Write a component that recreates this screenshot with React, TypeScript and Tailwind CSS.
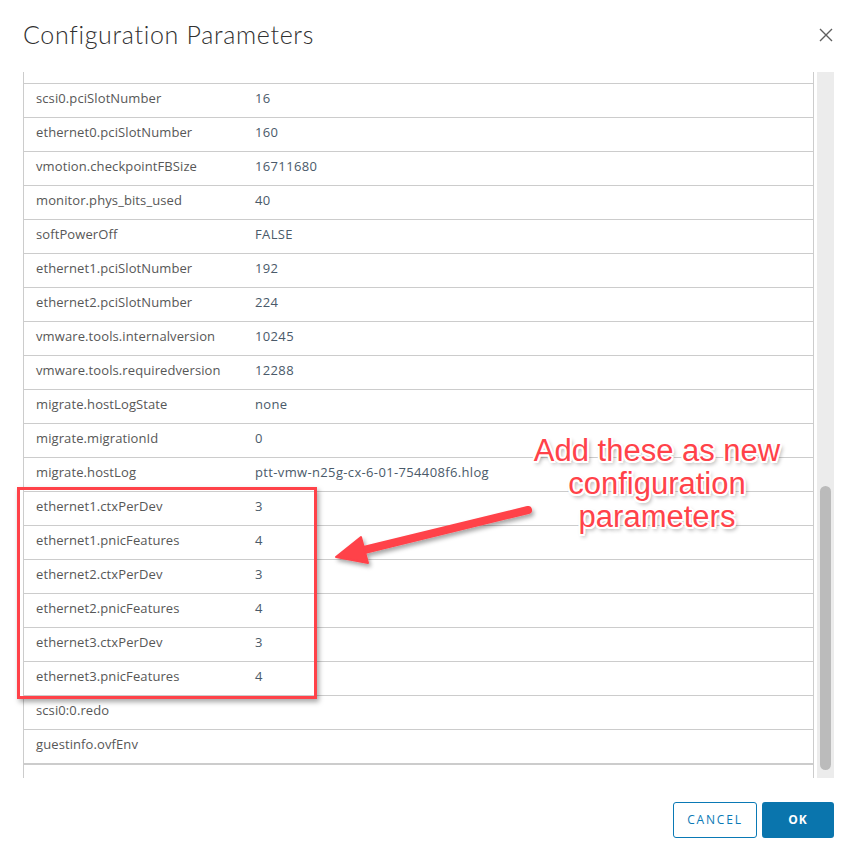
import React from "react";

const rows: [string, string][] = [
  ["scsi0.pciSlotNumber", "16"],
  ["ethernet0.pciSlotNumber", "160"],
  ["vmotion.checkpointFBSize", "16711680"],
  ["monitor.phys_bits_used", "40"],
  ["softPowerOff", "FALSE"],
  ["ethernet1.pciSlotNumber", "192"],
  ["ethernet2.pciSlotNumber", "224"],
  ["vmware.tools.internalversion", "10245"],
  ["vmware.tools.requiredversion", "12288"],
  ["migrate.hostLogState", "none"],
  ["migrate.migrationId", "0"],
  ["migrate.hostLog", "ptt-vmw-n25g-cx-6-01-754408f6.hlog"],
  ["ethernet1.ctxPerDev", "3"],
  ["ethernet1.pnicFeatures", "4"],
  ["ethernet2.ctxPerDev", "3"],
  ["ethernet2.pnicFeatures", "4"],
  ["ethernet3.ctxPerDev", "3"],
  ["ethernet3.pnicFeatures", "4"],
  ["scsi0:0.redo", ""],
  ["guestinfo.ovfEnv", ""],
];

export default function App() {
  return (
    <div className="relative w-[858px] h-[861px] bg-white overflow-hidden font-['Open_Sans',sans-serif]">
      {/* Header */}
      <div className="flex items-center justify-between h-[72px] pl-[23px] pr-[24px] pb-[3px]">
        <h1 className="text-[25px] font-light text-[#313131] tracking-[0.68px] font-['Lato',sans-serif]">
          Configuration Parameters
        </h1>
        <svg width="14" height="14" viewBox="0 0 14 14" className="mr-[1px] mt-[1px]">
          <path d="M1 1 L13 13 M13 1 L1 13" stroke="#5f5f5f" strokeWidth="1.4" />
        </svg>
      </div>

      {/* Body */}
      <div className="flex h-[706px] pl-[23px] pr-[24px] gap-[3px]">
        <div className="flex-1 border-l border-r border-[#cccccc] flex flex-col">
          <div className="h-[12px] border-b border-[#cccccc] shrink-0" />
          {rows.map(([k, v]) => (
            <div
              key={k}
              className="h-[34px] shrink-0 border-b border-[#cccccc] flex items-center pl-[12px] pb-[3px] text-[13px]"
            >
              <div className="w-[219px] text-[#575757] tracking-[0.1px]">{k}</div>
              <div className="text-[#4a5a6a] tracking-[0.35px]">{v}</div>
            </div>
          ))}
          <div className="h-[2px] bg-[#cccccc] -mt-[1px] shrink-0" />
        </div>
        <div className="w-[17px] bg-[#ececec] flex flex-col pt-[414px] px-[3px]">
          <div className="h-[284px] bg-[#bbbbbb] rounded-full" />
        </div>
      </div>

      {/* Footer */}
      <div className="flex justify-end gap-[5px] pr-[24px] pt-[24px]">
        <button className="w-[84px] h-[36px] border border-[#0a79b5] rounded-[3px] text-[#0a79b5] text-[12px] tracking-[1.8px] font-medium bg-white">
          CANCEL
        </button>
        <button className="w-[72px] h-[36px] bg-[#0a75ad] rounded-[3px] text-white text-[12px] tracking-[1px] font-bold">
          OK
        </button>
      </div>

      {/* Annotation: red box */}
      <div className="absolute left-[17px] top-[487px] w-[300px] h-[212px] border-[3px] border-[#ff4249] shadow-[2px_3px_5px_rgba(0,0,0,0.35)]" />

      {/* Annotation: arrow */}
      <svg className="absolute left-[320px] top-[495px]" width="220" height="80" viewBox="0 0 220 80">
        <defs>
          <filter id="sh" x="-20%" y="-40%" width="140%" height="180%">
            <feDropShadow dx="2" dy="3" stdDeviation="2" floodColor="#000" floodOpacity="0.35" />
          </filter>
        </defs>
        <g filter="url(#sh)">
          <path d="M208 15 L44 55" stroke="#ff4249" strokeWidth="8" strokeLinecap="round" />
          <path d="M16 62 L41 42 L48 68 Z" fill="#ff4249" stroke="#ff4249" strokeWidth="2" strokeLinejoin="round" />
        </g>
      </svg>

      {/* Annotation: text */}
      <div className="absolute left-[500px] top-[434px] w-[314px] text-center font-['Liberation_Sans',Arial,sans-serif] text-[31px] leading-[33px] text-[#ff4249] [text-shadow:-1.5px_-1.5px_0_#fff,1.5px_-1.5px_0_#fff,-1.5px_1.5px_0_#fff,1.5px_1.5px_0_#fff,0_2px_0_#fff,0_-2px_0_#fff,2px_0_0_#fff,-2px_0_0_#fff,2px_3px_4px_rgba(0,0,0,0.45)]">
        Add these as new
        <br />
        configuration
        <br />
        parameters
      </div>
    </div>
  );
}
